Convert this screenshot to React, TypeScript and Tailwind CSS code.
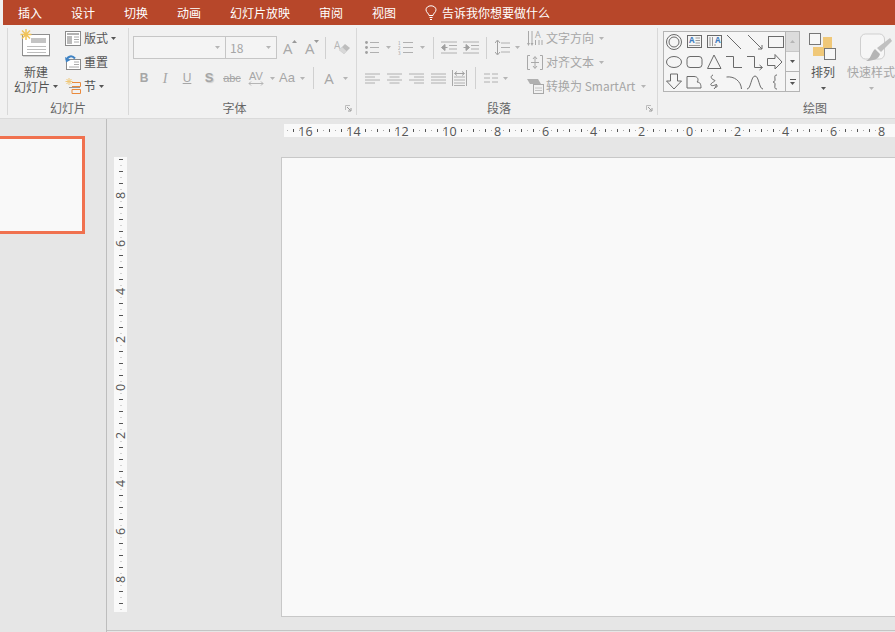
import type { ReactNode } from "react";

const tabs = ["插入", "设计", "切换", "动画", "幻灯片放映", "审阅", "视图"];

function Caret({ dark = false, className = "" }: { dark?: boolean; className?: string }) {
  return (
    <svg width="5" height="3" viewBox="0 0 5 3" className={`shrink-0 ${className}`}>
      <path d="M0 0H5L2.5 3Z" fill={dark ? "#555" : "#b5b5b5"} />
    </svg>
  );
}

function Sep({ className = "" }: { className?: string }) {
  return <div className={`w-px h-[22px] shrink-0 bg-[#d0d0d0] ${className}`} />;
}

function Launcher() {
  return (
    <svg width="16" height="10" viewBox="0 0 16 10" className="shrink-0">
      <path d="M5.5 7V2.5H10" fill="none" stroke="#bdbdbd" />
      <path d="M7 4L10.5 7.5M8 8H11V5" fill="none" stroke="#9a9a9a" />
    </svg>
  );
}

function Group({ label, width, launcher, children }: { label: string; width: string; launcher?: boolean; children: ReactNode }) {
  return (
    <section className={`flex flex-col shrink-0 h-full ${width}`}>
      <div className="flex h-[75px]">{children}</div>
      <div className="flex items-center h-[16px] text-[12px] text-[#666]">
        <span className="flex-1 text-center">{label}</span>
        {launcher && <Launcher />}
      </div>
    </section>
  );
}

function GroupEdge() {
  return <div className="w-px h-[87px] mt-[3px] shrink-0 bg-[#d8d8d8]" />;
}

function NewSlideIcon() {
  return (
    <svg width="33" height="30" viewBox="0 0 33 30" className="shrink-0">
      <rect x="3.5" y="5.5" width="27" height="21" fill="#fff" stroke="#8f8f8f" />
      <path d="M4 27.5H31" stroke="#d0d0d0" />
      <rect x="12" y="9" width="15" height="5" fill="#c4c4c4" />
      <path d="M8 17.5H27M8 20.5H27M8 23.5H27" stroke="#bdbdbd" />
      <path d="M7 0V11M1.5 5.5H12.5M3 1.5L11 9.5M11 1.5L3 9.5" stroke="#f0c35a" strokeWidth="1.5" />
    </svg>
  );
}

function LayoutIcon() {
  return (
    <svg width="16" height="15" viewBox="0 0 16 15" className="shrink-0">
      <rect x="0.5" y="0.5" width="15" height="14" fill="#fff" stroke="#8a8a8a" />
      <path d="M2 3H14" stroke="#999" strokeWidth="1.5" />
      <rect x="2" y="5" width="5" height="8" fill="#bbb" />
      <path d="M9 6H14M9 8.5H14M9 11H14" stroke="#aaa" />
    </svg>
  );
}

function ResetIcon() {
  return (
    <svg width="16" height="15" viewBox="0 0 16 15" className="shrink-0">
      <rect x="1.5" y="4.5" width="14" height="10" fill="#fff" stroke="#8a8a8a" />
      <path d="M9 7H14M9 9.5H14M4 12H14" stroke="#aaa" />
      <path d="M10 3.5C7 0 3 1 1.5 5" fill="none" stroke="#3f83c4" strokeWidth="2" />
      <path d="M0 2L1 7.5L5.5 5Z" fill="#3f83c4" />
    </svg>
  );
}

function SectionIcon() {
  return (
    <svg width="16" height="17" viewBox="0 0 16 17" className="shrink-0">
      <path d="M4 0V7M0.5 3.5H7.5M1.5 1L6.5 6M6.5 1L1.5 6" stroke="#f0c878" />
      <path d="M7 4.5H15.5V8.5H7M7 11.5H15.5V15.5H7V11.5" fill="none" stroke="#ea8a3c" />
      <path d="M4 9.5H15" stroke="#999" />
    </svg>
  );
}

function SmallA({ up }: { up: boolean }) {
  return (
    <div className="flex items-start w-[14px] shrink-0">
      <span className="text-[15px] leading-[20px] text-[#a8a8a8] font-['Open_Sans',sans-serif]">A</span>
      <svg width="5" height="3" viewBox="0 0 5 3" className="mt-[2px] -ml-px shrink-0">
        <path d={up ? "M0 3H5L2.5 0Z" : "M0 0H5L2.5 3Z"} fill="#999" />
      </svg>
    </div>
  );
}

function EraserIcon() {
  return (
    <svg width="16" height="17" viewBox="0 0 16 17" className="shrink-0">
      <text x="0" y="10" fontSize="10" fill="#b5b5b5" fontFamily="Open Sans">A</text>
      <path d="M5 11L11 5L16 9L10 15Z" fill="#bdbdbd" />
      <path d="M5 11L8 8L12.5 12L10 15Z" fill="#d8d8d8" />
    </svg>
  );
}

function BulletsIcon() {
  return (
    <svg width="14" height="15" viewBox="0 0 14 15" className="shrink-0">
      <path d="M5 2.5H14M5 7.5H14M5 12.5H14" stroke="#b0b0b0" />
      <circle cx="1.5" cy="2.5" r="1.4" fill="#a0a0a0" />
      <circle cx="1.5" cy="7.5" r="1.4" fill="#a0a0a0" />
      <circle cx="1.5" cy="12.5" r="1.4" fill="#a0a0a0" />
    </svg>
  );
}

function NumberedIcon() {
  return (
    <svg width="15" height="15" viewBox="0 0 15 15" className="shrink-0">
      <path d="M5 2.5H15M5 7.5H15M5 12.5H15" stroke="#b0b0b0" />
      <text x="0" y="4.5" fontSize="4.5" fill="#999">1</text>
      <text x="0" y="9.5" fontSize="4.5" fill="#999">2</text>
      <text x="0" y="14.5" fontSize="4.5" fill="#999">3</text>
    </svg>
  );
}

function IndentIcon({ out }: { out: boolean }) {
  return (
    <svg width="16" height="13" viewBox="0 0 16 13" className="shrink-0">
      <path d="M0 1H16M8 4.5H16M8 8H16M0 12H16" stroke="#b0b0b0" />
      {out ? (
        <path d="M6.5 6.5H3M4 3.5L0.5 6.5L4 9.5Z" fill="#a0a0a0" stroke="#a0a0a0" />
      ) : (
        <path d="M0.5 6.5H4M3 3.5L6.5 6.5L3 9.5Z" fill="#a0a0a0" stroke="#a0a0a0" />
      )}
    </svg>
  );
}

function LineSpacingIcon() {
  return (
    <svg width="15" height="17" viewBox="0 0 15 17" className="shrink-0">
      <path d="M6 4H15M6 8.5H15M6 13H15" stroke="#b0b0b0" />
      <path d="M2.5 2V15M0 4L2.5 1L5 4M0 13L2.5 16L5 13" fill="none" stroke="#a0a0a0" />
    </svg>
  );
}

function AlignIcon({ d }: { d: string }) {
  return (
    <svg width="15" height="11" viewBox="0 0 15 11" className="shrink-0">
      <path d={d} stroke="#b0b0b0" />
    </svg>
  );
}

function DistributeIcon() {
  return (
    <svg width="15" height="16" viewBox="0 0 15 16" className="shrink-0">
      <path d="M0.5 0V16M14.5 0V16" stroke="#a8a8a8" />
      <path d="M2 7H13M2 10H13M2 13H13M2 15.5H13" stroke="#b0b0b0" />
      <path d="M3 3.5H12M5 1.5L2.5 3.5L5 5.5M10 1.5L12.5 3.5L10 5.5" fill="none" stroke="#a0a0a0" />
    </svg>
  );
}

function ColumnsIcon() {
  return (
    <svg width="14" height="10" viewBox="0 0 14 10" className="shrink-0">
      <path d="M0 1H6M8 1H14M0 5H6M8 5H14M0 9H6M8 9H14" stroke="#b0b0b0" />
    </svg>
  );
}

function TextDirIcon() {
  return (
    <svg width="16" height="17" viewBox="0 0 16 17" className="shrink-0">
      <text x="8" y="8" fontSize="9" fill="#a8a8a8" fontFamily="Open Sans">A</text>
      <path d="M1.5 1V14M5 1V14M8.5 10V15M12 10V15M15 10V15" stroke="#a8a8a8" />
      <path d="M0 13L1.5 16L3 13M3.5 13L5 16L6.5 13" fill="#a8a8a8" />
    </svg>
  );
}

function AlignTextIcon() {
  return (
    <svg width="16" height="15" viewBox="0 0 16 15" className="shrink-0">
      <path d="M3 0.5H0.5V14.5H3M13 0.5H15.5V14.5H13" fill="none" stroke="#a8a8a8" />
      <path d="M8 2V13M6 4L8 1.5L10 4M6 11L8 13.5L10 11M4 7.5H12" fill="none" stroke="#a8a8a8" />
    </svg>
  );
}

function SmartArtIcon() {
  return (
    <svg width="18" height="16" viewBox="0 0 18 16" className="shrink-0">
      <path d="M0 1H11L14 6H3Z" fill="#b0b0b0" />
      <rect x="6.5" y="6.5" width="10" height="9" fill="#f1f1f1" stroke="#a8a8a8" />
      <path d="M8 10H15M8 12.5H15" stroke="#c4c4c4" />
    </svg>
  );
}

const shapes: ReactNode[] = [
  <>
    <circle cx="10" cy="10" r="7.5" />
    <circle cx="10" cy="10" r="5" />
  </>,
  <>
    <rect x="3.5" y="3.5" width="14" height="12" />
    <text x="5" y="11" fontSize="8" fontWeight="700" fill="#3f7cbf" stroke="none" fontFamily="Open Sans">A</text>
    <path d="M11.5 6H16M11.5 8.5H16M11.5 11H16M5 13.5H16" stroke="#999" />
  </>,
  <>
    <rect x="3.5" y="3.5" width="14" height="12" />
    <text x="11" y="11" fontSize="8" fontWeight="700" fill="#3f7cbf" stroke="none" fontFamily="Open Sans">A</text>
    <path d="M6 5V14M8.5 5V14M11 12V14" stroke="#999" />
  </>,
  <path d="M3 3L17 17" />,
  <>
    <path d="M3 3L17 17" />
    <path d="M13 17H17V13" />
  </>,
  <rect x="3.5" y="4.5" width="15" height="11" />,
  <ellipse cx="10" cy="10" rx="7.5" ry="5.5" />,
  <rect x="3" y="4.5" width="15" height="11" rx="3" />,
  <path d="M10 3L3.5 16.5H17Z" />,
  <path d="M2 4.5H9.5V15.5H18" />,
  <>
    <path d="M2 4.5H9.5V15.5H17" />
    <path d="M14.5 13L17.5 15.5L14.5 18" />
  </>,
  <path d="M2.5 6.5H10V2.5L17 10L10 17V13.5H2.5Z" />,
  <path d="M6.5 2H13.5V9H17.5L10 17L2.5 9H6.5Z" />,
  <path d="M3 4.5H10C14 4.5 15 8 13 10C16 10 17 12 17 16H3Z" />,
  <path d="M9 3C6 4 7 7 10 8C13 9 8 10 7 12C6 14 9 14 11 13C13 12 12 15 10 17M12 12C14 14 13 16 11 15" />,
  <path d="M2.5 5C10 4 17 9 17.5 17" />,
  <path d="M2 17C6 17 6 4 10 4C14 4 14 17 18 17" />,
  <path d="M12 3C9 3 10 5 10 8C10 9 9 10 8 10C9 10 10 11 10 12C10 15 9 17 12 17" />,
];

function ShapeGallery() {
  return (
    <div className="flex w-[137px] h-[61px] mt-[6px] ml-[5px] border border-[#b4b4b4] bg-[#f5f5f5] shrink-0">
      <div className="grid grid-cols-6 w-[121px] h-[60px]">
        {shapes.map((s, i) => (
          <svg key={i} width="20" height="20" viewBox="0 0 20 20" fill="none" stroke="#6a6a6a">
            {s}
          </svg>
        ))}
      </div>
      <div className="flex flex-col w-[14px] border-l border-[#b4b4b4]">
        <div className="h-[20px] flex items-center justify-center bg-[#dcdcdc] border-b border-[#c8c8c8]">
          <svg width="5" height="3" viewBox="0 0 5 3"><path d="M0 3H5L2.5 0Z" fill="#b5b5b5" /></svg>
        </div>
        <div className="h-[20px] flex items-center justify-center border-b border-[#b4b4b4]">
          <Caret dark />
        </div>
        <div className="flex-1 flex flex-col items-center justify-center gap-[2px]">
          <div className="w-[6px] h-px bg-[#555]" />
          <Caret dark />
        </div>
      </div>
    </div>
  );
}

function ArrangeIcon() {
  return (
    <svg width="28" height="28" viewBox="0 0 28 28" className="shrink-0">
      <rect x="14" y="4" width="9" height="12" fill="#f0c878" />
      <rect x="4" y="14" width="12" height="9" fill="#f0c878" />
      <rect x="0.5" y="0.5" width="11" height="11" fill="#f7f7f7" stroke="#777" />
      <rect x="15.5" y="15.5" width="11" height="11" fill="#f7f7f7" stroke="#777" />
    </svg>
  );
}

function QuickStyleIcon() {
  return (
    <svg width="34" height="30" viewBox="0 0 34 30" className="shrink-0">
      <rect x="1.5" y="1" width="24" height="25" rx="5" fill="#f6f6f6" stroke="#cfcfcf" />
      <path d="M18 15L31 5L33 8L22 19Z" fill="#c0c0c0" />
      <path d="M16 16L21 21C20 26 14 28 7 28C12 26 12 20 16 16Z" fill="#b5b5b5" />
    </svg>
  );
}

function Ribbon() {
  return (
    <div className="flex h-[94px] shrink-0 bg-[#f1f1f1] border-b border-[#dadada] overflow-hidden">
      <div className="w-[7px] shrink-0" />
      <GroupEdge />
      <Group label="幻灯片" width="w-[120px]">
        <div className="flex flex-col items-center w-[56px] text-[12px] leading-[15px] text-[#555]">
          <div className="mt-[4px] mb-[5px] -ml-[2px]">
            <NewSlideIcon />
          </div>
          <span>新建</span>
          <span className="flex items-center gap-[3px]">
            幻灯片
            <Caret dark />
          </span>
        </div>
        <div className="flex flex-col pt-[1px] ml-[1px] text-[12px] text-[#555]">
          <div className="flex items-center h-[24px] gap-[3px]">
            <LayoutIcon />
            <span>版式</span>
            <Caret dark />
          </div>
          <div className="flex items-center h-[24px] gap-[3px]">
            <ResetIcon />
            <span>重置</span>
          </div>
          <div className="flex items-center h-[24px] gap-[3px]">
            <SectionIcon />
            <span>节</span>
            <Caret dark />
          </div>
        </div>
      </Group>
      <GroupEdge />
      <Group label="字体" width="w-[227px]" launcher>
        <div className="flex flex-col pl-[4px] pt-[11px] w-full">
          <div className="flex items-center h-[23px]">
            <div className="flex items-center justify-end w-[93px] h-[23px] pr-[5px] border border-[#c6c6c6] bg-[#f4f4f4] shrink-0">
              <Caret />
            </div>
            <div className="flex items-center justify-between w-[52px] h-[23px] -ml-px pl-[4px] pr-[5px] border border-[#c6c6c6] bg-[#f4f4f4] shrink-0 text-[12px] text-[#a6a6a6]">
              18
              <Caret />
            </div>
            <div className="ml-[6px]"><SmallA up /></div>
            <div className="ml-[8px]"><SmallA up={false} /></div>
            <Sep className="ml-[6px]" />
            <div className="ml-[8px]"><EraserIcon /></div>
          </div>
          <div className="flex items-center h-[20px] mt-[9px] text-[12px] text-[#a6a6a6] font-['Liberation_Sans',sans-serif]">
            <span className="w-[10px] ml-[6px] text-center font-bold">B</span>
            <span className="w-[8px] ml-[12px] text-center italic text-[14px] font-['Liberation_Serif',serif]">I</span>
            <span className="w-[10px] ml-[13px] text-center underline">U</span>
            <span className="w-[10px] ml-[12px] text-center font-bold text-[13px] [text-shadow:1px_1px_1px_#ccc]">S</span>
            <span className="w-[20px] ml-[8px] text-center line-through text-[11px]">abc</span>
            <span className="w-[18px] ml-[5px] flex flex-col items-center text-[11px] leading-[10px]">
              AV
              <svg width="16" height="5" viewBox="0 0 16 5">
                <path d="M1 2.5H15M3 0.5L1 2.5L3 4.5M13 0.5L15 2.5L13 4.5" fill="none" stroke="#b5b5b5" />
              </svg>
            </span>
            <Caret className="ml-[5px]" />
            <span className="w-[16px] ml-[4px] text-center text-[13px]">Aa</span>
            <Caret className="ml-[5px]" />
            <Sep className="ml-[8px]" />
            <span className="w-[12px] ml-[9px] text-center text-[15px] font-['Open_Sans',sans-serif]">A</span>
            <Caret className="ml-[8px]" />
          </div>
        </div>
      </Group>
      <GroupEdge />
      <Group label="段落" width="w-[300px]" launcher>
        <div className="flex flex-col w-[170px] pl-[8px] pt-[11px] shrink-0">
          <div className="flex items-center h-[23px]">
            <BulletsIcon />
            <Caret className="ml-[7px]" />
            <div className="ml-[7px]"><NumberedIcon /></div>
            <Caret className="ml-[7px]" />
            <Sep className="ml-[8px]" />
            <div className="ml-[7px]"><IndentIcon out /></div>
            <div className="ml-[6px]"><IndentIcon out={false} /></div>
            <Sep className="ml-[7px]" />
            <div className="ml-[8px]"><LineSpacingIcon /></div>
            <Caret className="ml-[5px]" />
          </div>
          <div className="flex items-center h-[20px] mt-[9px]">
            <AlignIcon d="M0 1H15M0 4H10M0 7H15M0 10H10" />
            <div className="ml-[7px]"><AlignIcon d="M0 1H15M2.5 4H12.5M0 7H15M2.5 10H12.5" /></div>
            <div className="ml-[7px]"><AlignIcon d="M0 1H15M5 4H15M0 7H15M5 10H15" /></div>
            <div className="ml-[7px]"><AlignIcon d="M0 1H15M0 4H15M0 7H15M0 10H15" /></div>
            <div className="ml-[6px]"><DistributeIcon /></div>
            <Sep className="ml-[8px]" />
            <div className="ml-[8px]"><ColumnsIcon /></div>
            <Caret className="ml-[5px]" />
          </div>
        </div>
        <div className="flex flex-col pt-[1px] text-[12px] text-[#a6a6a6]">
          <div className="flex items-center h-[24px] gap-[3px]">
            <TextDirIcon />
            <span className="w-[48px]">文字方向</span>
            <Caret className="ml-[2px]" />
          </div>
          <div className="flex items-center h-[24px] gap-[3px]">
            <AlignTextIcon />
            <span className="w-[48px]">对齐文本</span>
            <Caret className="ml-[2px]" />
          </div>
          <div className="flex items-center h-[24px] gap-[1px]">
            <SmartArtIcon />
            <span className="w-[92px] whitespace-nowrap">转换为 SmartArt</span>
            <Caret className="ml-[2px]" />
          </div>
        </div>
      </Group>
      <GroupEdge />
      <Group label="绘图" width="w-[314px]">
        <ShapeGallery />
        <div className="flex flex-col items-center w-[28px] ml-[9px] mt-[8px] shrink-0 text-[12px] text-[#555]">
          <ArrangeIcon />
          <span className="mt-[3px] leading-[16px]">排列</span>
          <Caret dark className="mt-[7px]" />
        </div>
        <div className="flex flex-col items-center w-[48px] ml-[10px] mt-[8px] shrink-0 text-[12px] text-[#a6a6a6]">
          <div className="ml-[10px] h-[28px]">
            <QuickStyleIcon />
          </div>
          <span className="mt-[3px] leading-[16px] whitespace-nowrap">快速样式</span>
          <Caret className="mt-[7px]" />
        </div>
      </Group>
    </div>
  );
}

function HorizontalRuler() {
  const marks = [16, 14, 12, 10, 8, 6, 4, 2, 0, 2, 4, 6, 8];
  return (
    <svg width="611" height="13" viewBox="0 0 611 13" className="block bg-[#f9f9f9]">
      {Array.from({ length: 104 }, (_, i) => {
        const x = i * 6 + 21.5 - 48;
        if (i % 8 === 0) return null;
        return i % 2 === 0 ? (
          <path key={i} d={`M${x} 5V8`} stroke="#555" />
        ) : (
          <path key={i} d={`M${x} 6V7`} stroke="#aaa" />
        );
      })}
      {marks.map((n, i) => (
        <text key={i} x={21.5 + i * 48} y="11.5" textAnchor="middle" fontSize="12.5" fill="#555" fontFamily="Open Sans">
          {n}
        </text>
      ))}
    </svg>
  );
}

function VerticalRuler() {
  const marks = [8, 6, 4, 2, 0, 2, 4, 6, 8];
  return (
    <svg width="13" height="455" viewBox="0 0 13 455" className="block bg-[#f9f9f9] ml-[7px]">
      {Array.from({ length: 80 }, (_, i) => {
        const y = i * 6 + 2.5;
        if ((i - 6) % 8 === 0) return null;
        return i % 2 === 0 ? (
          <path key={i} d={`M5 ${y}H9`} stroke="#555" />
        ) : (
          <path key={i} d={`M6.5 ${y}H7.5`} stroke="#aaa" />
        );
      })}
      {marks.map((n, i) => (
        <text
          key={i}
          x="0"
          y="0"
          transform={`translate(11 ${38.5 + i * 48}) rotate(-90)`}
          textAnchor="middle"
          fontSize="12.5"
          fill="#555"
          fontFamily="Open Sans"
        >
          {n}
        </text>
      ))}
    </svg>
  );
}

export default function App() {
  return (
    <div className="flex flex-col w-[895px] h-[632px] overflow-hidden bg-[#e6e6e6] font-['Noto_Sans_CJK_SC',sans-serif]">
      <div className="flex h-[25px] shrink-0 bg-[#f1f1f1] pl-[3px]">
        <div className="flex flex-1 items-center gap-[29px] pl-[15px] bg-[#b7472a] text-[12px] text-white">
          {tabs.map((t) => (
            <span key={t}>{t}</span>
          ))}
          <span className="flex items-center gap-[5px]">
            <svg width="12" height="15" viewBox="0 0 12 15" fill="none" stroke="#fff">
              <path d="M4 10.5C4 8.5 1 7.5 1 4.8C1 2.5 3.2 0.8 6 0.8C8.8 0.8 11 2.5 11 4.8C11 7.5 8 8.5 8 10.5Z" />
              <path d="M4.5 12.5H7.5M5 14.5H7" />
            </svg>
            告诉我你想要做什么
          </span>
        </div>
      </div>
      <Ribbon />
      <div className="flex flex-1 min-h-0">
        <aside className="w-[107px] shrink-0 pt-[17px] border-r border-[#bdbdbd]">
          <div className="w-[85px] h-[98px] border-[3px] border-l-0 border-[#f0714f] bg-[#f9f9f9]" />
        </aside>
        <div className="grid grid-cols-[174px_1fr] grid-rows-[38px_460px] flex-1 min-w-0 h-[512px] border-b border-[#c4c4c4]">
          <div />
          <div className="pt-[5px] pl-[3px] overflow-hidden">
            <HorizontalRuler />
          </div>
          <div>
            <VerticalRuler />
          </div>
          <div className="bg-[#f9f9f9] border-l border-t border-b border-[#c8c8c8]" />
        </div>
      </div>
    </div>
  );
}
